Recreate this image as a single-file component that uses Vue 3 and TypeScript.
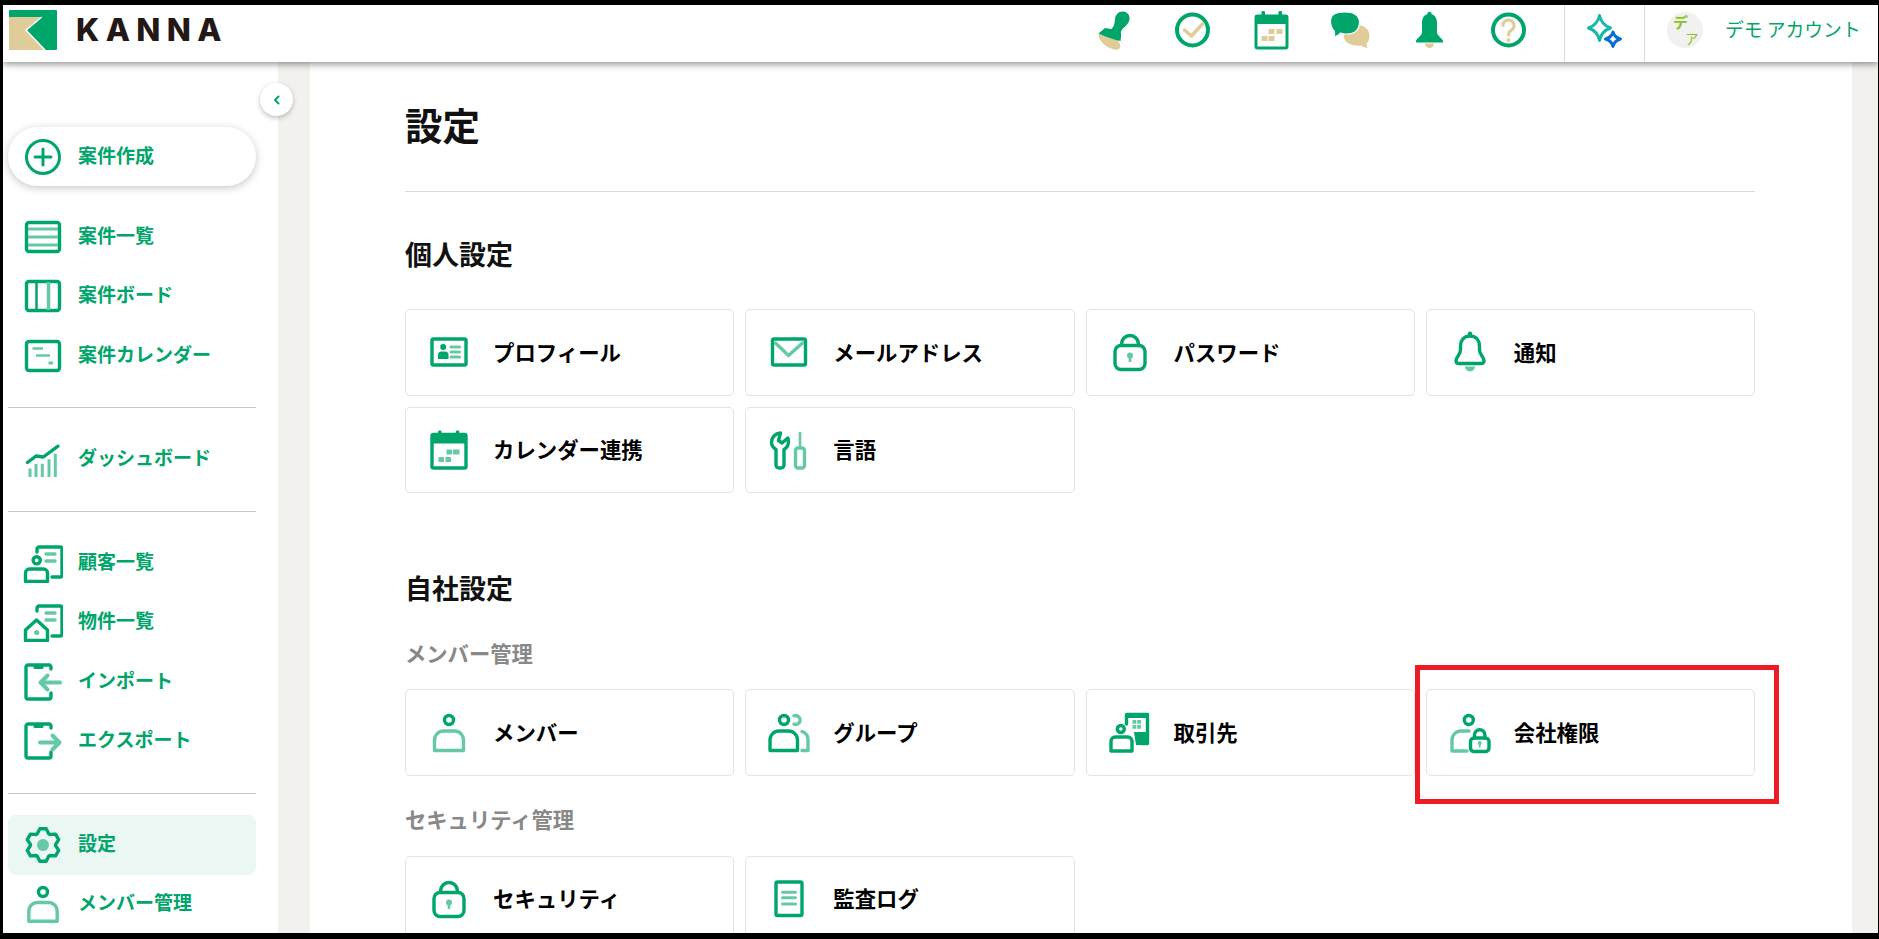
<script setup lang="ts">
const G = '#00a56a'
const L = '#66c9a6'

// six-toothed gear outline, round joins take care of the soft corners
const gearPath = () => {
  const pts: string[] = []
  for (let i = 0; i < 6; i++) {
    const a = -90 + i * 60
    const at = (r: number, d: number) => {
      const t = ((a + d) * Math.PI) / 180
      return `${(20 + r * Math.cos(t)).toFixed(2)} ${(20 + r * Math.sin(t)).toFixed(2)}`
    }
    pts.push(at(12.6, -27), at(16.6, -11), at(16.6, 11), at(12.6, 27))
  }
  return 'M' + pts.join('L') + 'Z'
}

const s = `fill="none" stroke-width="3.4" stroke-linecap="round" stroke-linejoin="round"`

const docOutline = `<path ${s} stroke="${G}" d="M14 9V6a2 2 0 0 1 2-2h21a2 2 0 0 1 2 2v26a2 2 0 0 1-2 2h-8"/><path ${s} stroke="${L}" d="M23 11h9M23 18h9"/>`
const boxOutline = `<path ${s} stroke="${G}" d="M28 7V5a2 2 0 0 0-2-2H5a2 2 0 0 0-2 2v30a2 2 0 0 0 2 2h21a2 2 0 0 0 2-2v-4"/><rect x="10.5" y="2" width="10" height="5" rx="1.5" fill="${G}"/>`

const navIcons: Record<string, string> = {
  list: `<rect ${s} stroke="${G}" x="3.5" y="5.5" width="33" height="29" rx="2.5"/><path d="M5 12h30M5 20h30M5 28h30" stroke="${L}" stroke-width="3"/>`,
  board: `<rect ${s} stroke="${G}" x="3.5" y="5.5" width="33" height="29" rx="2.5"/><path d="M13.5 6v28" stroke="${G}" stroke-width="2.5"/><path d="M25.5 6v28" stroke="${L}" stroke-width="3.5"/>`,
  gantt: `<rect ${s} stroke="${G}" x="3.5" y="5.5" width="33" height="29" rx="2.5"/><path d="M9.5 12.5H20M13 19.5h14" stroke="${L}" stroke-width="2.5"/><path d="M25.5 27h4.5" stroke="${L}" stroke-width="3"/>`,
  chart: `<path d="M7 38v-8.5M13 38V25M19.3 38V24.7M26 38V20.3M32.3 38V14.7" stroke="${L}" stroke-width="3"/><path ${s} stroke="${G}" d="M4.5 23.5 13 17l7.3 1L35 7.2"/>`,
  customer: `${docOutline}<circle ${s} stroke="${G}" cx="13.7" cy="17.3" r="3.6"/><path ${s} stroke="${G}" d="M2.5 38.5V30a4 4 0 0 1 4-4h14a4 4 0 0 1 4 4v8.5z"/>`,
  property: `${docOutline}<path ${s} stroke="${G}" d="M2.5 38.5V28l11-10 11 10v10.5z"/><circle cx="13.7" cy="30.5" r="2.6" fill="${L}"/>`,
  import: `${boxOutline}<path fill="none" stroke="${L}" stroke-width="4" stroke-linecap="round" stroke-linejoin="round" d="M37 20.5H18M24.5 13.5l-7 7 7 7"/>`,
  export: `${boxOutline}<path fill="none" stroke="${L}" stroke-width="4" stroke-linecap="round" stroke-linejoin="round" d="M17 21.5h19M29.5 14.5l7 7-7 7"/>`,
  gear: `<path ${s} stroke="${G}" d="${gearPath()}"/><circle cx="20" cy="20" r="6" fill="${L}"/>`,
  member: `<circle ${s} stroke="${G}" cx="20" cy="8" r="4.5"/><path ${s} stroke="${L}" d="M5.8 37.2V27a8.5 8.5 0 0 1 8.5-8.5h11.4a8.5 8.5 0 0 1 8.5 8.5v10.2z"/>`,
}

const lock = `<rect ${s} stroke="${G}" x="7" y="15.5" width="30" height="24" rx="6"/><path ${s} stroke="${G}" d="M13.5 15.5V14a8.5 8.5 0 0 1 17 0v1.5"/><circle cx="22" cy="25.5" r="3" fill="${L}"/><path d="M22 26v6" stroke="${L}" stroke-width="2.6"/>`

const cardIcons: Record<string, string> = {
  profile: `<rect ${s} stroke="${G}" x="5" y="9" width="34" height="26" rx="1.5"/><circle cx="16.2" cy="17" r="3" fill="${G}"/><path d="M11 29v-4a3.5 3.5 0 0 1 3.5-3.5H18a3.5 3.5 0 0 1 3.5 3.5v4z" fill="${G}"/><path d="M24 17h8.5M24 22h8.5M24 27h8.5" stroke="${L}" stroke-width="3" stroke-linecap="round"/>`,
  mail: `<rect ${s} stroke="${G}" x="5.5" y="9" width="33" height="26" rx="1.5"/><path ${s} stroke="${L}" d="M8.5 13 21.5 25.5 35.5 13"/>`,
  lock,
  bell: `<circle cx="22" cy="3.6" r="2.2" fill="${G}"/><path ${s} stroke="${G}" d="M22 6c-6.5 0-9.5 5-9.5 10.5V20c0 5-4.5 7-4.5 10.5 0 2 1 3 3 3h22c2 0 3-1 3-3 0-3.5-4.5-5.5-4.5-10.5v-3.5C31.5 11 28.5 6 22 6z"/><path d="M17 36.5h10a5 5 0 0 1-10 0z" fill="${L}"/>`,
  calendar: `<rect ${s} stroke="${G}" x="5" y="6.5" width="34" height="33.5" rx="1.5"/><path d="M5 6h34v9.5H5z" fill="${G}"/><rect x="11" y="2.5" width="3.5" height="5" rx="1.2" fill="${G}"/><rect x="28.8" y="2.5" width="3.5" height="5" rx="1.2" fill="${G}"/><path d="M19.5 21.5H25v5h-5.5zM26 21.5h6.5v5H26zM11.5 29H17v5h-5.5zM18.5 29H24v5h-5.5z" fill="${L}"/>`,
  tools: `<path ${s} stroke="${G}" d="M13.5 5C8 5.5 4.5 9.5 4.5 14c0 3.5 2 6 4.5 7.5V37a3 3 0 0 0 3 3h2a3 3 0 0 0 3-3V21.5c2.5-1.5 4.5-4 4.5-8 0-1.500-.3-2.500-.7-3.500L15 15l-3.500-2.500z"/><path d="M33 5v15" stroke="${L}" stroke-width="2.6" stroke-linecap="round"/><rect ${s} stroke="${L}" x="28.5" y="20" width="9" height="20" rx="2.5"/>`,
  member: `<circle ${s} stroke="${G}" cx="22" cy="10" r="4.5"/><path ${s} stroke="${L}" d="M7.5 40.5V30a9 9 0 0 1 9-9h11a9 9 0 0 1 9 9v10.5z"/>`,
  group: `<circle ${s} stroke="${G}" cx="17" cy="10" r="4.5"/><path ${s} stroke="${L}" d="M27 5.8a4.5 4.5 0 1 1 0 8.4M35 21.5c3.5 1.2 6 4.5 6 8.5v10.5h-6"/><path ${s} stroke="${G}" d="M3 40.5V30a9 9 0 0 1 9-9h9.5a9 9 0 0 1 9 9v10.5z"/>`,
  client: `<path ${s} stroke="${G}" d="M18.5 14V4.5h21v29H33"/><path d="M26 22h14v13H28z" fill="${G}"/><path d="M18 3h23v5H18z" fill="${G}"/><path d="M24.5 10h3.8v3.8h-3.8zM29.2 10H33v3.800h-3.8zM24.5 15h3.800v3.800h-3.800zM29.2 15H33v3.800h-3.800z" fill="${L}"/><circle ${s} stroke="${G}" cx="12.8" cy="19" r="3.5" style="fill:#fff"/><path ${s} stroke="${G}" d="M3 41v-9.500A4.500 4.500 0 0 1 7.500 27H20a4.500 4.500 0 0 1 4 4.500V41z" style="fill:#fff"/>`,
  company: `<circle ${s} stroke="${G}" cx="20.8" cy="10" r="4.5"/><path ${s} stroke="${L}" d="M21 21h-8a9 9 0 0 0-9 9v11h15"/><rect ${s} stroke="${G}" x="22.5" y="28" width="18.5" height="13.5" rx="3.5" style="fill:#fff"/><path ${s} stroke="${G}" d="M26.5 28v-3a5.2 5.2 0 0 1 10.4 0v3"/><circle cx="31.7" cy="33" r="2" fill="${L}"/><path d="M31.7 33.5v4" stroke="${L}" stroke-width="1.8"/>`,
  log: `<rect ${s} stroke="${G}" x="9" y="5" width="26" height="33.5" rx="1.5"/><path d="M15.5 15.3h13M15.5 20.8h13M15.5 27h13" stroke="${L}" stroke-width="3" stroke-linecap="round"/>`,
}

const navGroups = [
  [
    { label: '案件一覧', icon: 'list' },
    { label: '案件ボード', icon: 'board' },
    { label: '案件カレンダー', icon: 'gantt' },
  ],
  [{ label: 'ダッシュボード', icon: 'chart' }],
  [
    { label: '顧客一覧', icon: 'customer' },
    { label: '物件一覧', icon: 'property' },
    { label: 'インポート', icon: 'import' },
    { label: 'エクスポート', icon: 'export' },
  ],
  [
    { label: '設定', icon: 'gear', active: true },
    { label: 'メンバー管理', icon: 'member' },
  ],
]

const personal = [
  { label: 'プロフィール', icon: 'profile' },
  { label: 'メールアドレス', icon: 'mail' },
  { label: 'パスワード', icon: 'lock' },
  { label: '通知', icon: 'bell' },
  { label: 'カレンダー連携', icon: 'calendar' },
  { label: '言語', icon: 'tools' },
]
const members = [
  { label: 'メンバー', icon: 'member' },
  { label: 'グループ', icon: 'group' },
  { label: '取引先', icon: 'client' },
  { label: '会社権限', icon: 'company', marked: true },
]
const security = [
  { label: 'セキュリティ', icon: 'lock' },
  { label: '監査ログ', icon: 'log' },
]
</script>

<template>
  <div class="frame">
    <div class="screen">
      <header class="topbar">
        <svg class="logo" width="48" height="40" viewBox="0 0 48 40">
          <rect width="48" height="40" rx="1" fill="#00a56a" />
          <path d="M0 7h32.7L17 20.3 36 40H1a1 1 0 0 1-1-1z" fill="#e0cc98" />
          <path d="M32.7 7 17 20.3 36 40" fill="none" stroke="#fff" stroke-width="1.5" />
        </svg>
        <span class="brand">KANNA</span>

        <div class="tools">
          <svg width="40" height="40" viewBox="0 0 40 40">
            <ellipse cx="16" cy="31" rx="12.5" ry="6" transform="rotate(35 16 31)" fill="#e0cc98" />
            <path d="M5 23.5 11.5 18 18 19c3-3 3-6 3.5-10C22 4 26 .5 31 1.8c4.500 1.200 6 5.500 4.500 9.500-1.500 4-5.500 6-7.500 9.200-1 1.500-.5 3-.2 4.500L27 31C21 30 10 26 5 23.500z" fill="#00a56a" />
          </svg>
          <svg width="40" height="40" viewBox="0 0 40 40">
            <circle cx="20" cy="20" r="15.5" fill="none" stroke="#00a56a" stroke-width="4" />
            <path d="M12 20l7 6 11-12" fill="none" stroke="#e0cc98" stroke-width="3.5" stroke-linecap="round" stroke-linejoin="round" />
          </svg>
          <svg width="40" height="40" viewBox="0 0 40 40">
            <rect x="4.5" y="6" width="31" height="32" rx="1.5" fill="none" stroke="#00a56a" stroke-width="3" />
            <path d="M4 5h32v9H4z" fill="#00a56a" />
            <rect x="10" y="1" width="3.5" height="6" rx="1.2" fill="#00a56a" />
            <rect x="27" y="1" width="3.5" height="6" rx="1.2" fill="#00a56a" />
            <path d="M17 19h6v5h-6zM25 19h6v5h-6zM10 26h6v5h-6zM17 26h6v5h-6z" fill="#e0cc98" />
          </svg>
          <svg width="42" height="40" viewBox="0 0 42 40">
            <path d="M14 25c0-6 5-10 13-10 7 0 13 3.500 13 11 0 3-1 6-3 8l1 4c-3-.5-5-1.500-6-2.500-8 1-18-2-18-10.500z" fill="#e0cc98" />
            <path d="M1 11C1 5 6 2 15 2s15 3 15 10c0 7-4 12-13 12-2.500 0-4.500-.4-6-1-1.500 2-4 3.500-7 4 1-1.500 1.500-3 1-5.500C2.500 19 1 16 1 11z" fill="#00a56a" stroke="#fff" stroke-width="1.2" />
          </svg>
          <svg width="40" height="40" viewBox="0 0 40 40">
            <circle cx="20" cy="4" r="2.2" fill="#00a56a" />
            <path d="M20 4c-6 0-7.500 5-7.500 9v9c0 4-5.500 6-6 9v1.500h27V31c-.5-3-6-5-6-9v-9c0-4-1.500-9-7.500-9z" fill="#00a56a" />
            <path d="M15.500 33.500h9a4.500 4.500 0 0 1-9 0z" fill="#e0cc98" />
          </svg>
          <svg width="40" height="40" viewBox="0 0 40 40">
            <circle cx="20" cy="20" r="15.5" fill="none" stroke="#00a56a" stroke-width="4" />
            <path d="M14.500 15.500a5.500 5.500 0 1 1 8.500 4.600c-2 1.400-3 2.400-3 4.900" fill="none" stroke="#e0cc98" stroke-width="3" stroke-linecap="round" />
            <circle cx="20" cy="30" r="2" fill="#e0cc98" />
          </svg>
        </div>

        <div class="spark">
          <svg width="40" height="40" viewBox="0 0 40 40">
            <path d="M14.500 5.500Q16.500 15 25.500 18 16.500 21 14.500 30.500 12.500 21 3.500 18 12.500 15 14.500 5.500z" fill="none" stroke="#16b8ae" stroke-width="3" stroke-linejoin="round" />
            <path d="M28 22Q29.500 27.500 35.500 29 29.500 30.500 28 36.500 26.500 30.500 20.500 29 26.500 27.500 28 22z" fill="#fff" stroke="#0a6fd0" stroke-width="3" stroke-linejoin="round" />
          </svg>
        </div>

        <div class="account">
          <div class="avatar">
            <span class="avatar-a">デ</span>
            <span class="avatar-b">ア</span>
          </div>
          <span class="account-name">デモ アカウント</span>
        </div>
      </header>

      <div class="body">
        <aside class="sidebar">
          <button class="collapse" type="button">
            <svg width="12" height="12" viewBox="0 0 12 12">
              <path d="M7.500 2.500 4 6l3.500 3.500" fill="none" stroke="#00a56a" stroke-width="2" stroke-linecap="round" stroke-linejoin="round" />
            </svg>
          </button>

          <button class="create" type="button">
            <svg width="40" height="40" viewBox="0 0 40 40">
              <circle cx="20" cy="20" r="16.5" fill="none" stroke="#00a56a" stroke-width="3" />
              <path d="M12 20h16M20 12v16" stroke="#00a56a" stroke-width="3" stroke-linecap="round" />
            </svg>
            <span>案件作成</span>
          </button>

          <template v-for="(group, i) in navGroups" :key="i">
            <hr v-if="i > 0" class="nav-rule" />
            <a
              v-for="item in group"
              :key="item.label"
              class="nav-item"
              :class="{ active: item.active }"
            >
              <svg width="40" height="40" viewBox="0 0 40 40" v-html="navIcons[item.icon]"></svg>
              <span>{{ item.label }}</span>
            </a>
          </template>
        </aside>

        <div class="gutter"></div>

        <main class="main">
          <h1 class="title">設定</h1>

          <h2 class="heading first">個人設定</h2>
          <div class="cards">
            <a v-for="card in personal" :key="card.label" class="card">
              <svg width="44" height="44" viewBox="0 0 44 44" v-html="cardIcons[card.icon]"></svg>
              <span>{{ card.label }}</span>
            </a>
          </div>

          <h2 class="heading">自社設定</h2>
          <h3 class="sub">メンバー管理</h3>
          <div class="cards">
            <a v-for="card in members" :key="card.label" class="card">
              <svg width="44" height="44" viewBox="0 0 44 44" v-html="cardIcons[card.icon]"></svg>
              <span>{{ card.label }}</span>
              <i v-if="card.marked" class="marker"></i>
            </a>
          </div>

          <h3 class="sub next">セキュリティ管理</h3>
          <div class="cards">
            <a v-for="card in security" :key="card.label" class="card">
              <svg width="44" height="44" viewBox="0 0 44 44" v-html="cardIcons[card.icon]"></svg>
              <span>{{ card.label }}</span>
            </a>
          </div>
        </main>

        <div class="gutter right"></div>
      </div>
    </div>
  </div>
</template>

<style>
html,
body {
  margin: 0;
  background: #000;
  overflow: hidden;
}
</style>

<style scoped>
.frame {
  box-sizing: border-box;
  width: 1879px;
  height: 939px;
  padding: 5px 1px 6px 3px;
  background: #000;
  font-family: "Noto Sans CJK JP", "Noto Sans", sans-serif;
}

.screen {
  height: 100%;
  display: flex;
  flex-direction: column;
  overflow: hidden;
  background: #fff;
}

.topbar {
  flex: none;
  height: 57px;
  display: flex;
  align-items: center;
  position: relative;
  z-index: 2;
  background: #fff;
  box-shadow: 0 2px 7px rgba(0, 0, 0, 0.45);
}

.logo {
  margin-left: 6px;
  margin-bottom: 8px;
}

.brand {
  margin-left: 19px;
  margin-bottom: 8px;
  font-family: Inter, "Liberation Sans", sans-serif;
  font-size: 31.5px;
  font-weight: 800;
  letter-spacing: 6.4px;
  line-height: 1;
  color: #231815;
}

.tools {
  margin-left: auto;
  margin-right: 16px;
  margin-bottom: 7px;
  display: flex;
  align-items: center;
}

.tools svg {
  width: 79px;
}

.spark {
  width: 80px;
  height: 100%;
  padding-bottom: 7px;
  display: flex;
  align-items: center;
  justify-content: center;
  box-sizing: border-box;
  border-left: 1px solid #dcdcdc;
}

.account {
  width: 234px;
  height: 100%;
  box-sizing: border-box;
  display: flex;
  align-items: center;
  padding: 0 0 7px 22px;
  border-left: 1px solid #dcdcdc;
}

.avatar {
  width: 36px;
  height: 36px;
  border-radius: 50%;
  background: #f1f1ef;
  display: grid;
  grid-template-columns: 1fr 1fr;
  grid-template-rows: 1fr 1fr;
  line-height: 1;
}

.avatar-a {
  grid-area: 1 / 1;
  align-self: center;
  justify-self: end;
  margin-right: -3px;
  font-size: 15px;
  font-weight: 700;
  color: #8cc21f;
}

.avatar-b {
  grid-area: 2 / 2;
  align-self: center;
  font-size: 13.5px;
  color: #8cc21f;
}

.account-name {
  margin-left: 22px;
  padding-bottom: 4px;
  font-size: 18.8px;
  color: #00a56a;
  white-space: nowrap;
}

.body {
  flex: 1;
  min-height: 0;
  display: flex;
}

.sidebar {
  flex: none;
  width: 275px;
  box-sizing: border-box;
  position: relative;
  padding: 65px 22px 0 5px;
  background: #fff;
}

.collapse {
  position: absolute;
  top: 21px;
  right: -15px;
  z-index: 1;
  width: 33px;
  height: 33px;
  padding: 0;
  display: flex;
  align-items: center;
  justify-content: center;
  border: none;
  border-radius: 50%;
  background: #fff;
  box-shadow: 0 2px 5px rgba(0, 0, 0, 0.25);
}

.create {
  width: 100%;
  height: 59px;
  margin-bottom: 21px;
  padding: 0 0 0 15px;
  display: flex;
  align-items: center;
  gap: 15px;
  border: none;
  border-radius: 30px;
  background: #fff;
  box-shadow: 0 2px 8px rgba(0, 0, 0, 0.22);
  font: inherit;
  font-size: 19px;
  font-weight: 700;
  color: #00a56a;
}

.create span,
.nav-item span {
  padding-bottom: 5px;
}

.nav-item {
  height: 59.5px;
  padding-left: 15px;
  display: flex;
  align-items: center;
  gap: 15px;
  border-radius: 8px;
  font-size: 19px;
  font-weight: 700;
  color: #00a56a;
}

.nav-item.active {
  background: #ebf7f2;
}

.nav-rule {
  margin: 21.5px 0;
  height: 1px;
  border: none;
  background: #c8c8c8;
}

.gutter {
  flex: none;
  width: 32px;
  background: #f2f1ed;
}

.gutter.right {
  width: 26px;
}

.main {
  flex: 1;
  min-width: 0;
  box-sizing: border-box;
  padding: 35px 97px 0 95px;
  background: #fff;
}

.title {
  margin: 0;
  padding-bottom: 40px;
  border-bottom: 1px solid #dcdcdc;
  font-size: 37.5px;
  font-weight: 700;
  line-height: 54px;
  color: #111;
}

.heading {
  margin: 75px 0 0;
  font-size: 27px;
  font-weight: 700;
  line-height: 40px;
  color: #111;
}

.heading.first {
  margin-top: 42px;
  margin-bottom: 35px;
}

.sub {
  margin: 29px 0 20px;
  font-size: 21.3px;
  font-weight: 700;
  line-height: 32px;
  color: #888;
}

.sub.next {
  margin: 27px 0 21px;
}

.cards {
  display: grid;
  grid-template-columns: repeat(4, 1fr);
  grid-auto-rows: 86.5px;
  gap: 11px;
}

.card {
  position: relative;
  box-sizing: border-box;
  padding-left: 21px;
  display: flex;
  align-items: center;
  gap: 22px;
  border: 1px solid #e3e3e3;
  border-radius: 5px;
  background: #fff;
  font-size: 21.4px;
  font-weight: 700;
  color: #000;
}

.card span {
  padding-bottom: 2px;
}

.marker {
  position: absolute;
  top: -25px;
  right: -25px;
  bottom: -29px;
  left: -12px;
  border: 5px solid #ed1c24;
  pointer-events: none;
}
</style>
